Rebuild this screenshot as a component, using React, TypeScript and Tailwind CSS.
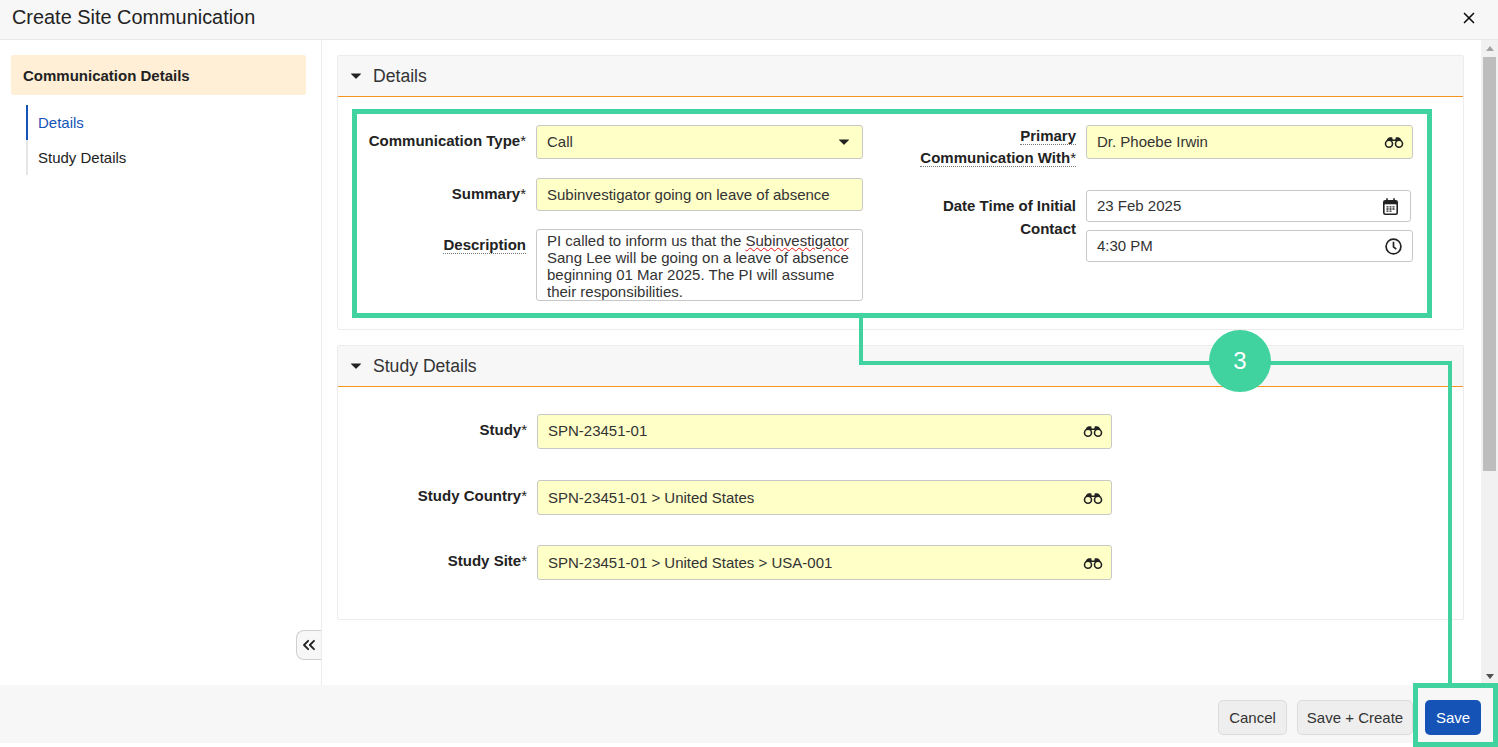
import React from "react";
import { X, ChevronsLeft } from "lucide-react";

const Caret = ({ className = "" }: { className?: string }) => (
  <svg viewBox="0 0 10 6" className={`w-[10px] h-[6px] ${className}`}>
    <path d="M0.5 0.5h9a.5.5 0 0 1 .3.8L5.4 5.6a.6.6 0 0 1-.8 0L.2 1.3a.5.5 0 0 1 .3-.8z" fill="#222" />
  </svg>
);

const Binoculars = () => (
  <svg viewBox="0 0 20 11" className="w-[20px] h-[11px]" fill="none">
    <path d="M2.500 4C3 1.500 4.500 0.300 6 0.300H8.200L8.700 2.400H11.300L11.800 0.300H14C15.500 0.300 17 1.500 17.500 4z" fill="#222" />
    <circle cx="5" cy="6.700" r="3.500" stroke="#222" strokeWidth="1.600" />
    <circle cx="15" cy="6.700" r="3.500" stroke="#222" strokeWidth="1.600" />
  </svg>
);

const CalendarIcon = () => (
  <svg viewBox="0 0 15 17" className="w-[15px] h-[17px] mr-[4px]" fill="none">
    <rect x="0.800" y="2.800" width="13.400" height="13.400" rx="1.500" stroke="#222" strokeWidth="1.600" />
    <path d="M1 3h13v3.300H1z" fill="#222" />
    <path d="M4 0.300v3M11 0.300v3" stroke="#222" strokeWidth="1.600" />
    <path d="M3.500 8.800h2M6.500 8.800h2M9.500 8.800h2M3.500 11h2M6.500 11h2M9.500 11h2M3.500 13.200h2M6.500 13.200h2" stroke="#222" strokeWidth="1.300" />
  </svg>
);

const ClockIcon = () => (
  <svg viewBox="0 0 17 17" className="w-[17px] h-[17px] mr-[2px]" fill="none">
    <circle cx="8.500" cy="8.500" r="7.400" stroke="#222" strokeWidth="1.700" />
    <path d="M8.500 3.800V8.900l2.800 2.200" stroke="#222" strokeWidth="1.700" />
  </svg>
);

const Label = ({ children, dotted }: { children: React.ReactNode; dotted?: boolean }) => (
  <span className={`font-bold text-[#222] ${dotted ? "border-b border-dotted border-[#777]" : ""}`}>{children}</span>
);

const Req = () => <span className="font-normal">*</span>;

const Input = ({
  value,
  icon,
  required,
  className = ""
}: {
  value: string;
  icon?: React.ReactNode;
  required?: boolean;
  className?: string;
}) => (
  <div
    className={`flex items-center justify-between pl-[10px] pr-[8px] border border-[#c8c8c8] rounded-[3px] text-[#333] ${
      required ? "bg-[#ffffc8]" : "bg-white"
    } ${className}`}
  >
    <span>{value}</span>
    {icon}
  </div>
);

const Section = ({ title, className = "", children }: { title: string; className?: string; children: React.ReactNode }) => (
  <section className={`border border-[#ececec] rounded-[2px] ${className}`}>
    <div className="h-[41px] flex items-center gap-[12px] pl-[13px] bg-[#f7f7f7] border-b border-b-[#f7931e]">
      <Caret />
      <span className="text-[17.6px] text-[#333]">{title}</span>
    </div>
    {children}
  </section>
);

const StudyRow = ({
  label,
  value,
  className = "",
  inputClass = ""
}: {
  label: string;
  value: string;
  className?: string;
  inputClass?: string;
}) => (
  <div className={`flex ${className}`}>
    <div className="w-[189px] text-right pt-[6px] leading-[20px]">
      <Label>
        {label}
        <Req />
      </Label>
    </div>
    <Input value={value} required icon={<Binoculars />} className={`ml-[10px] w-[575px] h-[35px] ${inputClass}`} />
  </div>
);

const App = () => {
  return (
    <div className="relative w-[1498px] h-[747px] overflow-hidden bg-white flex flex-col text-[15px] text-[#222] font-['Liberation_Sans',Arial,sans-serif]">
      {/* Header */}
      <header className="h-[40px] shrink-0 flex items-center justify-between pl-[12px] pr-[20px] pb-[4px] bg-[#f7f7f7] border-b border-[#e8e8e8]">
        <h1 className="text-[19.9px] text-[#222]">Create Site Communication</h1>
        <X className="w-[18px] h-[18px] text-[#111]" strokeWidth={2.2} />
      </header>

      <div className="flex-1 flex min-h-0">
        {/* Sidebar */}
        <aside className="relative w-[322px] shrink-0 border-r border-[#ececec] pt-[15px] pl-[11px]">
          <div className="w-[295px] h-[40px] flex items-center pl-[12px] pt-[2px] bg-[#ffefd6] rounded-[2px] font-bold text-[#222]">
            Communication Details
          </div>
          <nav className="mt-[10px] ml-[15px]">
            <div className="h-[35px] flex items-center pl-[10px] pt-px border-l-2 border-[#1553b6] text-[#1553b6]">Details</div>
            <div className="h-[35px] flex items-center pl-[10px] pt-px border-l-2 border-[#e6e6e6] text-[#222]">Study Details</div>
          </nav>
          <button className="absolute right-0 top-[590px] w-[25px] h-[30px] flex items-center justify-center bg-[#f7f7f7] border border-r-0 border-[#cfcfcf] rounded-l-[8px]">
            <ChevronsLeft className="w-[20px] h-[20px] text-[#222]" strokeWidth={2.2} />
          </button>
        </aside>

        {/* Main */}
        <main className="flex-1 pt-[15px] pl-[15px]">
          <Section title="Details" className="w-[1127px] h-[275px]">
            <div className="flex pt-[28px]">
              <div className="w-[526px]">
                <div className="flex">
                  <div className="w-[188px] text-right pt-[6px] leading-[20px]">
                    <Label>
                      Communication Type
                      <Req />
                    </Label>
                  </div>
                  <Input value="Call" required icon={<Caret className="mr-[5px]" />} className="ml-[10px] w-[327px] h-[34px]" />
                </div>
                <div className="flex mt-[19px]">
                  <div className="w-[188px] text-right pt-[6px] leading-[20px]">
                    <Label>
                      Summary
                      <Req />
                    </Label>
                  </div>
                  <Input value="Subinvestigator going on leave of absence" required className="ml-[10px] w-[327px] h-[33px] pt-px" />
                </div>
                <div className="flex mt-[18px]">
                  <div className="w-[188px] text-right pt-[6px] leading-[20px]">
                    <Label dotted>Description</Label>
                  </div>
                  <div className="ml-[10px] w-[327px] h-[72px] px-[10px] pt-[2px] border border-[#c8c8c8] rounded-[3px] leading-[17px] text-[#333] overflow-hidden">
                    PI called to inform us that the{" "}
                    <span className="underline decoration-wavy decoration-[#f01010] decoration-1">Subinvestigator</span>{" "}
                    Sang Lee will be going on a leave of absence beginning 01 Mar 2025. The PI will assume their responsibilities.
                  </div>
                </div>
              </div>
              <div className="ml-[24px] w-[552px]">
                <div className="flex">
                  <div className="w-[188px] text-right leading-[22px]">
                    <Label dotted>Primary</Label>
                    <br />
                    <Label dotted>
                      Communication With
                      <Req />
                    </Label>
                  </div>
                  <Input value="Dr. Phoebe Irwin" required icon={<Binoculars />} className="ml-[10px] w-[327px] h-[34px]" />
                </div>
                <div className="flex mt-[21px]">
                  <div className="w-[188px] text-right pt-[4px] leading-[23px]">
                    <Label>Date Time of Initial</Label>
                    <br />
                    <Label>Contact</Label>
                  </div>
                  <div className="ml-[10px]">
                    <Input value="23 Feb 2025" icon={<CalendarIcon />} className="w-[325px] h-[32px]" />
                    <Input value="4:30 PM" icon={<ClockIcon />} className="mt-[8px] w-[327px] h-[32px]" />
                  </div>
                </div>
              </div>
            </div>
          </Section>

          <Section title="Study Details" className="w-[1127px] h-[275px] mt-[15px]">
            <div className="pt-[27px]">
              <StudyRow label="Study" value="SPN-23451-01" />
              <StudyRow label="Study Country" value="SPN-23451-01 > United States" className="mt-[31px]" inputClass="pt-[2px]" />
              <StudyRow label="Study Site" value="SPN-23451-01 > United States > USA-001" className="mt-[30px]" inputClass="pt-[2px]" />
            </div>
          </Section>
        </main>

        {/* Scrollbar */}
        <div className="w-[17px] shrink-0 bg-[#f1f1f1] flex flex-col items-center">
          <div className="h-[17px] flex items-center justify-center">
            <div className="w-0 h-0 border-x-[4px] border-x-transparent border-b-[5px] border-b-[#a3a3a3]" />
          </div>
          <div className="w-[13px] h-[414px] bg-[#bdbdbd]" />
          <div className="flex-1" />
          <div className="h-[17px] flex items-center justify-center">
            <div className="w-0 h-0 border-x-[4px] border-x-transparent border-t-[5px] border-t-[#505050]" />
          </div>
        </div>
      </div>

      {/* Footer */}
      <footer className="h-[58px] mb-[4px] shrink-0 flex items-start justify-end pt-[15px] pr-[17px] bg-[#f7f7f7]">
        <button className="h-[35px] w-[69px] pt-px border border-[#dcdcdc] rounded-[5px] bg-[#eeeeee] text-[#333]">Cancel</button>
        <button className="ml-[10px] h-[35px] w-[116px] pt-px border border-[#dcdcdc] rounded-[5px] bg-[#eeeeee] text-[#333]">Save + Create</button>
        <button className="ml-[12px] h-[35px] w-[56px] pt-px rounded-[5px] bg-[#1553b6] text-white">Save</button>
      </footer>

      {/* Annotation overlay */}
      <div className="absolute left-[352px] top-[109px] w-[1080px] h-[209px] border-[5px] border-[#40d29f]" />
      <div className="absolute left-[859px] top-[318px] w-[4px] h-[47px] bg-[#40d29f]" />
      <div className="absolute left-[859px] top-[361px] w-[592px] h-[4px] bg-[#40d29f]" />
      <div className="absolute left-[1448px] top-[361px] w-[4px] h-[325px] bg-[#40d29f]" />
      <div className="absolute left-[1413px] top-[683px] w-[85px] h-[64px] border-[5px] border-[#40d29f]" />
      <div className="absolute left-[1209px] top-[330px] w-[62px] h-[62px] rounded-full bg-[#40d29f] flex items-center justify-center text-white text-[24px]">
        3
      </div>
    </div>
  );
};

export default App;
